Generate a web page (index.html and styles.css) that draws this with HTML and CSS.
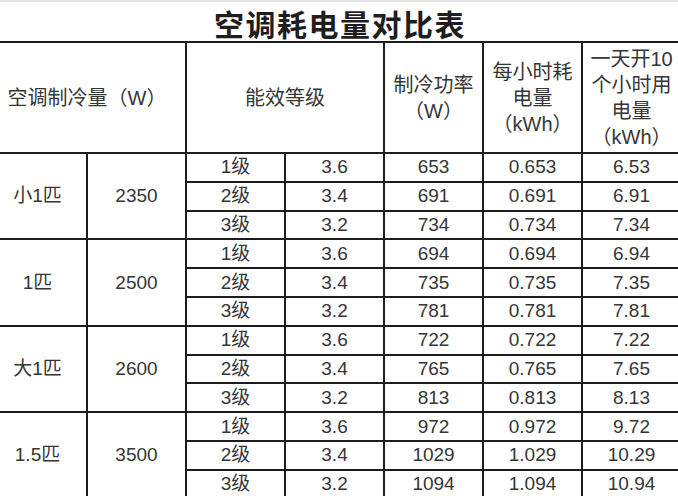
FILE: index.html
```html
<!DOCTYPE html>
<html lang="zh">
<head>
<meta charset="utf-8">
<title>空调耗电量对比表</title>
<link rel="stylesheet" href="styles.css">
</head>
<body>
<div class="page">
  <h1 class="title">空调耗电量对比表</h1>
  <table class="grid">
    <colgroup>
      <col class="c1"><col class="c"><col class="c"><col class="c"><col class="c"><col class="c"><col class="c">
    </colgroup>
    <thead>
      <tr class="head">
        <th colspan="2" class="hcap">空调制冷量（W）</th>
        <th colspan="2">能效等级</th>
        <th>制冷功率<br>（W）</th>
        <th>每小时耗<br>电量<br>（kWh）</th>
        <th>一天开10<br>个小时用<br>电量<br>（kWh）</th>
      </tr>
    </thead>
    <tbody>
      <tr><td rowspan="3">小1匹</td><td rowspan="3">2350</td><td>1级</td><td>3.6</td><td>653</td><td>0.653</td><td>6.53</td></tr>
      <tr><td>2级</td><td>3.4</td><td>691</td><td>0.691</td><td>6.91</td></tr>
      <tr><td>3级</td><td>3.2</td><td>734</td><td>0.734</td><td>7.34</td></tr>
      <tr><td rowspan="3">1匹</td><td rowspan="3">2500</td><td>1级</td><td>3.6</td><td>694</td><td>0.694</td><td>6.94</td></tr>
      <tr><td>2级</td><td>3.4</td><td>735</td><td>0.735</td><td>7.35</td></tr>
      <tr><td>3级</td><td>3.2</td><td>781</td><td>0.781</td><td>7.81</td></tr>
      <tr><td rowspan="3">大1匹</td><td rowspan="3">2600</td><td>1级</td><td>3.6</td><td>722</td><td>0.722</td><td>7.22</td></tr>
      <tr><td>2级</td><td>3.4</td><td>765</td><td>0.765</td><td>7.65</td></tr>
      <tr><td>3级</td><td>3.2</td><td>813</td><td>0.813</td><td>8.13</td></tr>
      <tr><td rowspan="3">1.5匹</td><td rowspan="3">3500</td><td>1级</td><td>3.6</td><td>972</td><td>0.972</td><td>9.72</td></tr>
      <tr><td>2级</td><td>3.4</td><td>1029</td><td>1.029</td><td>10.29</td></tr>
      <tr><td>3级</td><td>3.2</td><td>1094</td><td>1.094</td><td>10.94</td></tr>
    </tbody>
  </table>
</div>
</body>
</html>
```
FILE: styles.css
```css
html, body {
  margin: 0;
  padding: 0;
  background: #fff;
}
body {
  width: 678px;
  height: 496px;
  overflow: hidden;
  font-family: "Liberation Sans", "Noto Sans CJK SC", sans-serif;
  color: #333;
}
.page {
  border-top: 2px solid #e4e4e4;
}
.title {
  margin: 0;
  height: 39px;
  line-height: 42px;
  text-align: center;
  font-size: 30px;
  font-weight: bold;
  color: #1e1e1e;
  font-family: "Noto Sans CJK SC", sans-serif;
  letter-spacing: 1.5px;
  padding-left: 2px;
}
.grid {
  margin-left: -13px;
  border-collapse: collapse;
  table-layout: fixed;
  width: 694px;
}
.c1 { width: 99px; }
.c { width: 99px; }
.grid th, .grid td {
  border: 2px solid #1c1c1c;
  padding: 0;
  text-align: center;
  vertical-align: middle;
  font-weight: normal;
  font-size: 19px;
  color: #363636;
}
.grid th {
  height: 109px;
  font-size: 20px;
  line-height: 26px;
}
.hcap {
  padding-right: 12px;
}
.grid td {
  height: 26.8px;
  line-height: 24px;
}
```
